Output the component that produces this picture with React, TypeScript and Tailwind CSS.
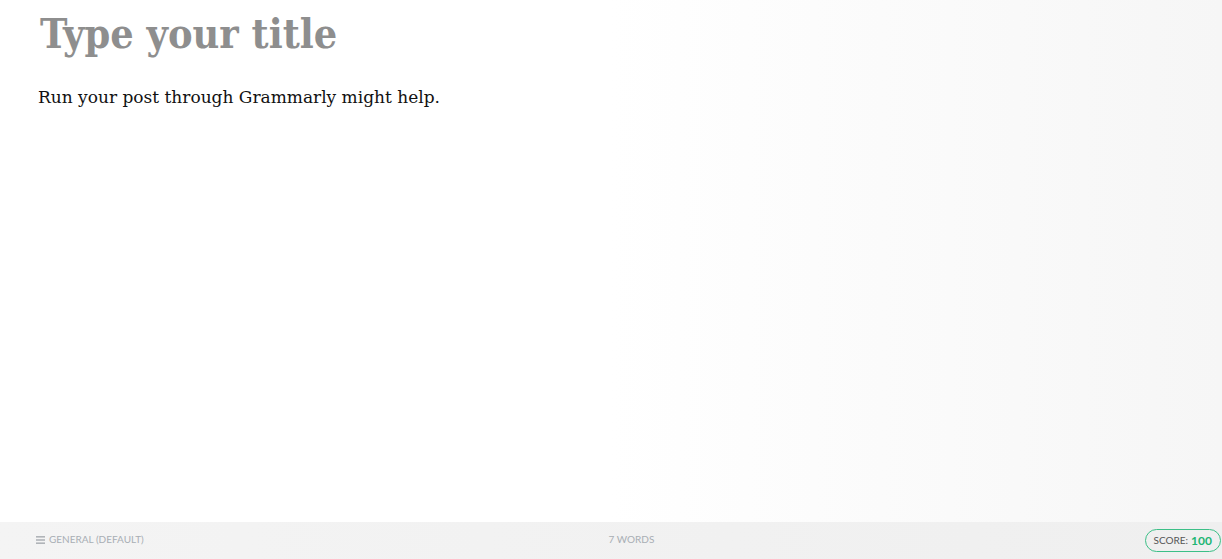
import React from "react";

export default function App() {
  return (
    <div className="w-[1222px] h-[559px] flex flex-col overflow-hidden bg-gradient-to-r from-white via-white to-[#f6f6f6]">
      <div className="flex-1 pl-[38px] pt-[6px]">
        <h1 className="text-[41px] leading-[56px] font-bold text-[#8e8e8e] pl-[2px] [font-family:'DejaVu_Serif_Condensed','DejaVu_Serif',serif]">
          Type your title
        </h1>
        <p className="mt-[22px] text-[17px] leading-[26px] text-[#111] [font-family:'DejaVu_Serif',serif]">
          Run your post through Grammarly might help.
        </p>
      </div>
      <div className="h-[37px] flex items-center bg-gradient-to-r from-[#f4f4f4] to-[#efefef] [font-family:Lato,sans-serif] text-[10px] text-[#a8aeb4] uppercase">
        <div className="flex-1 flex items-center pl-[36px] gap-[4px] pb-[2px]">
          <svg width="9" height="8" viewBox="0 0 9 8" className="text-[#b0b4b8]">
            <rect x="0" y="0" width="9" height="1.6" fill="currentColor" />
            <rect x="0" y="3.2" width="9" height="1.6" fill="currentColor" />
            <rect x="0" y="6.4" width="9" height="1.6" fill="currentColor" />
          </svg>
          <span>General (Default)</span>
        </div>
        <div className="flex-1 text-center pl-[6px] pb-[2px]">7 Words</div>
        <div className="flex-1 flex justify-end pr-[1px]">
          <div className="h-[23px] px-[8px] flex items-center rounded-full border border-[#3cbf87] text-[10px] text-[#555] gap-[3px]">
            <span>Score:</span>
            <span className="text-[12px] font-bold text-[#21b573]">100</span>
          </div>
        </div>
      </div>
    </div>
  );
}
